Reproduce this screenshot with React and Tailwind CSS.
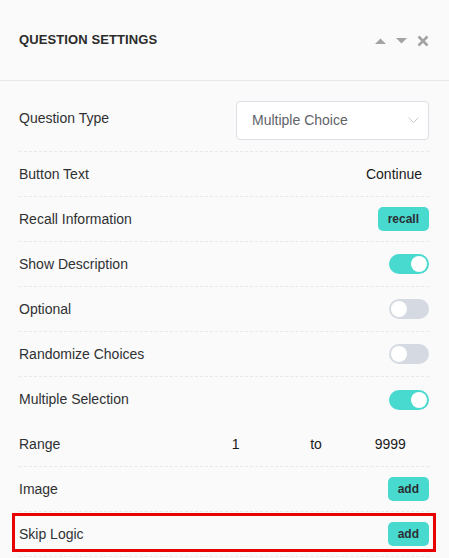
const Toggle = ({ on }) => (
  <div
    className={`relative h-[20px] w-[40px] rounded-full ${on ? "bg-[#48d9cf]" : "bg-[#d5d9e1]"}`}
  >
    <div
      className={`absolute top-[2px] h-[16px] w-[16px] rounded-full bg-white ${on ? "left-[22px]" : "left-[2px]"}`}
    />
  </div>
);

const TealButton = ({ children }) => (
  <button className="h-[24px] rounded-[5px] bg-[#48d9cf] px-[10px] text-[12px] font-bold leading-[24px] text-[#2b2f33]">
    {children}
  </button>
);

const Row = ({ label, children, dashed = true, className = "" }) => (
  <div
    className={`relative flex h-[45px] items-center justify-between ${
      dashed ? "border-b border-dashed border-[#e6e8ec]" : ""
    } ${className}`}
  >
    <span className="text-[14px] text-[#303133]">{label}</span>
    {children}
  </div>
);

const App = () => {
  return (
    <div
      className="min-h-[558px] w-[449px] bg-[#fafafa]"
      style={{ fontFamily: '"Liberation Sans", Arial, sans-serif' }}
    >
      <div className="flex h-[81px] items-center justify-between border-b border-[#e8e8e8] pl-[19px] pr-[20px] pb-[1px]">
        <h2 className="text-[13px] font-bold tracking-[0.1px] text-[#2b2b2b]">QUESTION SETTINGS</h2>
        <div className="flex items-center gap-[10px] pt-[3px]">
          <svg width="11" height="6" viewBox="0 0 11 6">
            <polygon points="0,6 5.5,0.5 11,6" fill="#a3a3a3" />
          </svg>
          <svg width="11" height="6" viewBox="0 0 11 6">
            <polygon points="0,0 11,0 5.5,5.5" fill="#a3a3a3" />
          </svg>
          <svg width="12" height="12" viewBox="0 0 12 12">
            <path d="M1.5 1.5 L10.5 10.5 M10.5 1.5 L1.5 10.5" stroke="#a3a3a3" strokeWidth="2.6" />
          </svg>
        </div>
      </div>

      <div className="pl-[19px] pr-[20px] pt-[9px]">
        <div className="flex h-[62px] items-center justify-between border-b border-dashed border-[#e6e8ec] pb-[1px]">
          <span className="pb-[4px] text-[14px] text-[#303133]">Question Type</span>
          <div className="flex h-[39px] w-[193px] items-center justify-between rounded-[4px] border border-[#dcdfe6] bg-white pl-[15px] pr-[9px]">
            <span className="text-[14px] text-[#5f6368]">Multiple Choice</span>
            <svg width="11" height="7" viewBox="0 0 11 7">
              <polyline points="0.5,0.5 5.5,5.5 10.5,0.5" fill="none" stroke="#c5c8ce" strokeWidth="1" />
            </svg>
          </div>
        </div>

        <Row label="Button Text">
          <span className="pr-[7px] text-[14px] text-[#1a1a1a]">Continue</span>
        </Row>
        <Row label="Recall Information">
          <TealButton>recall</TealButton>
        </Row>
        <Row label="Show Description">
          <Toggle on />
        </Row>
        <Row label="Optional">
          <Toggle />
        </Row>
        <Row label="Randomize Choices">
          <Toggle />
        </Row>
        <Row label="Multiple Selection" dashed={false}>
          <Toggle on />
        </Row>
        <Row label="Range">
          <div className="grid w-[232px] grid-cols-3 text-center text-[14px] text-[#1a1a1a]">
            <span>1</span>
            <span className="pl-[6px]">to</span>
            <span>9999</span>
          </div>
        </Row>
        <Row label="Image">
          <TealButton>add</TealButton>
        </Row>
        <Row label="Skip Logic">
          <TealButton>add</TealButton>
          <div className="pointer-events-none absolute -left-[7px] -right-[7px] top-[1px] bottom-[4px] border-[3px] border-[#e60000]" />
        </Row>
      </div>
    </div>
  );
};

export default App;
